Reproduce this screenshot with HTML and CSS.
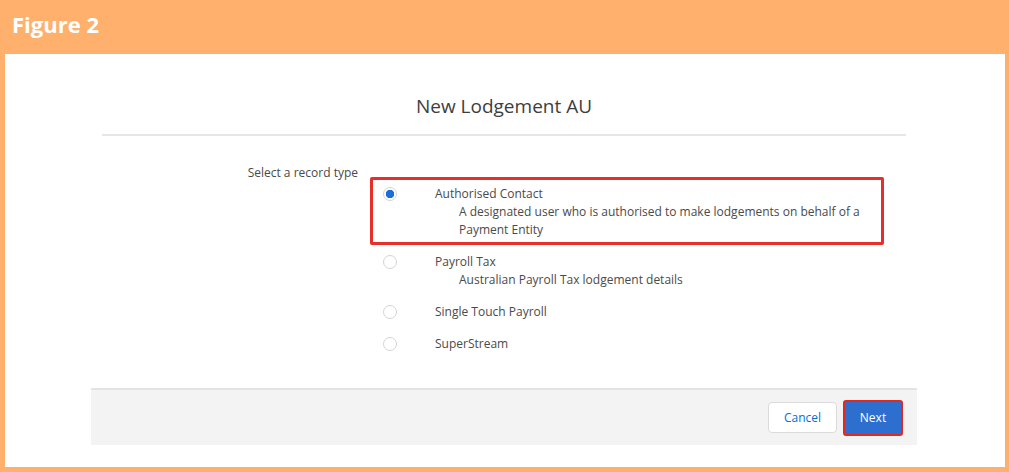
FILE: index.html
```html
<!DOCTYPE html>
<html lang="en">
<head>
  <meta charset="UTF-8" />
  <title>Figure 2 - New Lodgement AU</title>
  <link rel="stylesheet" href="styles.css">
</head>
<body>
  <div class="frame">
    <div class="frame-title">Figure 2</div>
    <div class="panel">
      <div class="modal">
        <div class="modal-header">
          <h2>New Lodgement AU</h2>
        </div>

        <div class="modal-body">
          <div class="field-label">Select a record type</div>
          <div class="options">
            <div class="option selected">
              <span class="radio"></span>
              <div class="option-text">
                <div class="option-name">Authorised Contact</div>
                <div class="option-desc">A designated user who is authorised to make lodgements on behalf of a<br>Payment Entity</div>
              </div>
            </div>
            <div class="option">
              <span class="radio"></span>
              <div class="option-text">
                <div class="option-name">Payroll Tax</div>
                <div class="option-desc">Australian Payroll Tax lodgement details</div>
              </div>
            </div>
            <div class="option">
              <span class="radio"></span>
              <div class="option-text">
                <div class="option-name">Single Touch Payroll</div>
              </div>
            </div>
            <div class="option">
              <span class="radio"></span>
              <div class="option-text">
                <div class="option-name">SuperStream</div>
              </div>
            </div>
          </div>
        </div>

        <div class="modal-footer">
          <button class="btn btn-cancel">Cancel</button>
          <button class="btn btn-next">Next</button>
        </div>
      </div>
    </div>
  </div>
</body>
</html>
```

FILE: styles.css
```css
body {
  margin: 0;
  font-family: 'Open Sans', 'Noto Sans', sans-serif;
}

.frame {
  width: 1009px;
  height: 472px;
  box-sizing: border-box;
  background: #ffb06c;
  padding: 0 4px 5px 5px;
  display: flex;
  flex-direction: column;
}

.frame-title {
  height: 54px;
  box-sizing: border-box;
  padding: 9px 0 0 7px;
  color: #ffffff;
  font-weight: 700;
  font-size: 22px;
  line-height: 30px;
}

.panel {
  flex: 1;
  background: #ffffff;
}

.modal {
  width: 826px;
  margin-left: 86px;
}

.modal-header {
  margin: 0 11px;
  padding: 40px 0 16px;
  border-bottom: 2px solid #e6e6e6;
  text-align: center;
}

.modal-header h2 {
  margin: 0;
  font-size: 19px;
  font-weight: 400;
  line-height: 24px;
  color: #3e3e3c;
}

.modal-body {
  display: flex;
  gap: 12px;
  padding-bottom: 29px;
  font-size: 12px;
  color: #4a4a4a;
}

.field-label {
  width: 267px;
  text-align: right;
  padding-top: 29px;
  line-height: 16px;
}

.options {
  width: 514px;
  padding-top: 41px;
}

.option {
  display: flex;
  align-items: flex-start;
  gap: 38px;
  padding: 5px 0 3px 10px;
  border: 3px solid transparent;
  line-height: 18px;
}

.option.selected {
  border-color: #e5302a;
  border-radius: 2px;
}

.radio {
  width: 14px;
  height: 14px;
  margin-top: 2px;
  box-sizing: border-box;
  border: 1px solid #d4d4d4;
  border-radius: 50%;
  background: #ffffff;
  flex-shrink: 0;
}

.option.selected .radio {
  background: radial-gradient(circle, #1b6ed6 0 4px, #ffffff 4.5px);
}

.option-desc {
  padding-left: 24px;
}

.modal-footer {
  display: flex;
  justify-content: flex-end;
  align-items: center;
  gap: 6px;
  height: 55px;
  padding-right: 14px;
  background: #f3f3f3;
  border-top: 2px solid #e3e3e3;
}

.btn {
  font-family: inherit;
  font-size: 12px;
  border-radius: 4px;
  cursor: pointer;
}

.btn-cancel {
  width: 69px;
  height: 31px;
  background: #ffffff;
  border: 1px solid #dddbda;
  color: #0070d2;
}

.btn-next {
  width: 60px;
  height: 36px;
  background: #2d6fce;
  border: 2px solid #e2281f;
  border-radius: 3px;
  color: #ffffff;
}
```
